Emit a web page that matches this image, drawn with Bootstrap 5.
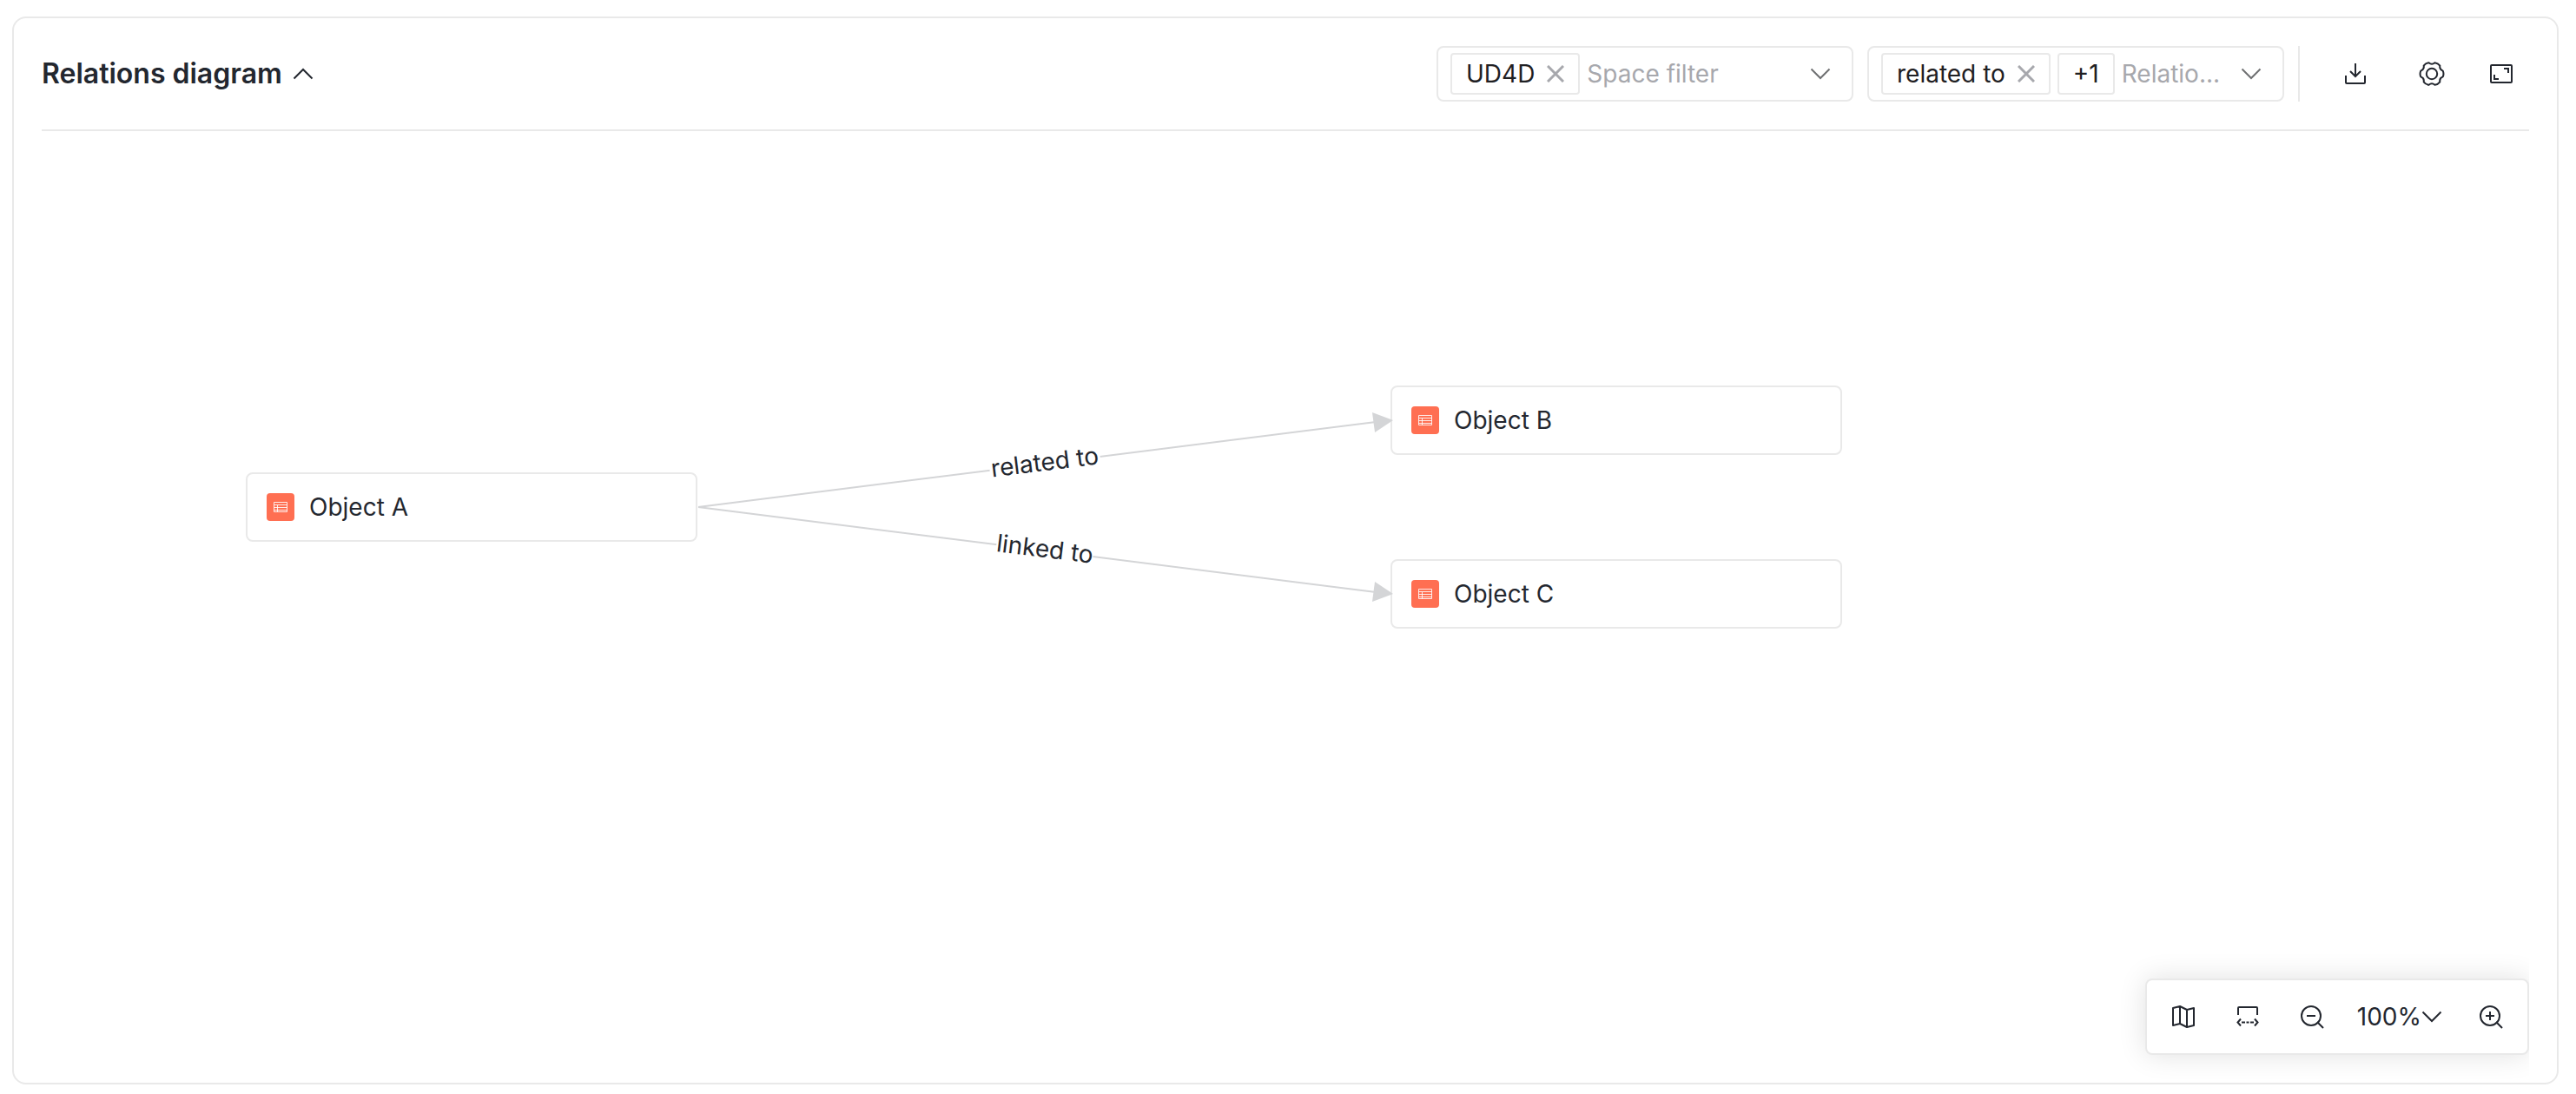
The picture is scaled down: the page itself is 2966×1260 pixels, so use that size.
<!DOCTYPE html>
<html lang="en">
<head>
<meta charset="utf-8">
<meta name="viewport" content="width=device-width, initial-scale=1">
<title>Relations diagram</title>
<link href="https://cdn.jsdelivr.net/npm/bootstrap@5.3.0/dist/css/bootstrap.min.css" rel="stylesheet">
<style>
  :root { --line: #e9e9e9; --ink: #23272f; --muted: #a7a8ad; --edge: #d4d5d7; }
  body { font-family: Inter, "Liberation Sans", sans-serif; font-size: 28px; line-height: 40px; color: var(--ink); background: #fff; }
  svg { display: block; flex: none; }
  .ico { fill: none; stroke: currentColor; stroke-width: 2; }
  .page { padding: 19px 20px 11px 14px; }
  .panel { border: 2px solid var(--line); border-radius: 16px; padding: 32px; }
  .panel-head { border-bottom: 2px solid var(--line); padding-bottom: 32px; }
  .panel-title { font-size: 32px; line-height: 40px; font-weight: 600; }
  .plain { border: 0; background: none; padding: 0; color: inherit; line-height: inherit; }
  .filter { width: 480px; height: 64px; border: 2px solid var(--line); border-radius: 8px; padding: 0 24px 0 14px; }
  .chip { height: 48px; border: 2px solid var(--line); border-radius: 4px; padding: 0 16px; color: #1f2023; white-space: nowrap; gap: 14px; }
  .chip .plain { color: var(--muted); }
  .filter input { flex: 1 1 0; min-width: 0; border: 0; outline: 0; padding: 0; background: none; color: var(--ink); text-overflow: ellipsis; }
  .filter input::placeholder { color: var(--muted); opacity: 1; }
  .caret { color: #6f7072; }
  .rule { width: 2px; height: 64px; background: var(--line); }
  .tool { width: 32px; height: 32px; display: flex; align-items: center; justify-content: center; }
  .stage { overflow-x: clip; }
  .edges { position: absolute; left: 0; top: 0; z-index: 1; overflow: visible; pointer-events: none; }
  .edges text { font-size: 28px; fill: var(--ink); text-anchor: middle; }
  .edges line { stroke: var(--edge); stroke-width: 2; }
  .edges polygon { fill: var(--edge); }
  .edges rect { fill: #fff; }
  .node { position: absolute; width: 520px; height: 80px; border: 2px solid var(--line); border-radius: 8px; padding: 0 22px; gap: 17px; background: #fff; }
  .node-a { left: 235px; top: 393px; }
  .node-b { left: 1553px; top: 293px; }
  .node-c { left: 1553px; top: 493px; }
  .zoombar { position: absolute; right: 0; bottom: 0; height: 88px; border: 2px solid var(--line); border-radius: 8px; background: #fff; padding: 0 26px; gap: 36px; box-shadow: 0 0 32px rgba(0,0,0,.12); }
  .zoombar-tools { gap: 42px; }
</style>
<script src="https://cdn.jsdelivr.net/npm/bootstrap@5.3.0/dist/js/bootstrap.bundle.min.js" defer></script>
</head>
<body>
<svg width="0" height="0" class="position-absolute" aria-hidden="true">
  <symbol id="i-table" viewBox="0 0 32 32">
    <rect width="32" height="32" rx="4" fill="#ff6f52"/>
    <path d="M8.500 10.500h15v11h-15zM8.500 13.500h15M8.500 16.500h15M8.500 19.500h15M12.500 14v7.500" fill="none" stroke="#fff" stroke-opacity=".85" stroke-width="1"/>
  </symbol>
  <symbol id="i-down" viewBox="0 0 24 24"><path d="M1.500 6.500L12 17L22.500 6.500"/></symbol>
  <symbol id="i-x" viewBox="0 0 20 20"><path d="M1 1L19 19M19 1L1 19" stroke-width="3"/></symbol>
</svg>
<div class="page d-flex min-vh-100">
  <main class="panel d-flex flex-column flex-grow-1">
    <header class="panel-head d-flex align-items-center justify-content-between">
      <div class="d-flex align-items-center gap-2">
        <h2 class="panel-title m-0">Relations diagram</h2>
        <button class="plain tool" type="button" aria-label="Collapse"><svg class="ico" width="24" height="24" viewBox="0 0 24 24"><path d="M1.500 17.500L12 7L22.500 17.500"/></svg></button>
      </div>
      <div class="d-flex align-items-center gap-3">
        <div class="filter d-flex align-items-center gap-2">
          <span class="chip d-flex align-items-center">UD4D
            <button class="plain" type="button" aria-label="Remove UD4D"><svg class="ico" width="20" height="20"><use href="#i-x"/></svg></button></span>
          <input type="text" placeholder="Space filter" aria-label="Space filter">
          <button class="plain caret" type="button" aria-label="Open space filter"><svg class="ico" width="24" height="24"><use href="#i-down"/></svg></button>
        </div>
        <div class="filter d-flex align-items-center gap-2">
          <span class="chip d-flex align-items-center">related to
            <button class="plain" type="button" aria-label="Remove related to"><svg class="ico" width="20" height="20"><use href="#i-x"/></svg></button></span>
          <span class="chip d-flex align-items-center">+1</span>
          <input type="text" placeholder="Relatio..." aria-label="Relation filter">
          <button class="plain caret" type="button" aria-label="Open relation filter"><svg class="ico" width="24" height="24"><use href="#i-down"/></svg></button>
        </div>
        <div class="rule"></div>
        <div class="d-flex align-items-center ps-4 pe-3">
          <button class="plain tool ms-2 me-5" type="button" aria-label="Download"><svg class="ico" width="28" height="28" viewBox="0 0 28 28"><path d="M14 2v15M8 11l6 6 6-6M3 16v8q0 1 1 1h20q1 0 1-1v-8"/></svg></button>
          <button class="plain tool ms-2 me-4" type="button" aria-label="Settings"><svg class="ico" width="30" height="30" viewBox="-15 -15 30 30"><path stroke-linejoin="round" d="M12.750 -3.420Q14.200 0 12.750 3.420Q8.500 4.900 9.330 9.330Q7.100 12.300 3.420 12.750Q0 9.800 -3.420 12.750Q-7.100 12.300 -9.330 9.330Q-8.500 4.900 -12.750 3.420Q-14.200 0 -12.750 -3.420Q-8.500 -4.900 -9.330 -9.330Q-7.100 -12.300 -3.420 -12.750Q0 -9.800 3.420 -12.750Q7.100 -12.300 9.330 -9.330Q8.500 -4.900 12.750 -3.420Z"/><circle r="6.200"/></svg></button>
          <button class="plain tool ms-4" type="button" aria-label="Full screen"><svg class="ico" width="28" height="28" viewBox="0 0 28 28"><rect x="2" y="4" width="24" height="20" rx="1"/><path d="M17 8h5v5M6 15v5h5"/></svg></button>
        </div>
      </div>
    </header>
    <section class="stage position-relative flex-grow-1" aria-label="Diagram">
      <div class="node node-a d-flex align-items-center"><svg width="32" height="32"><use href="#i-table"/></svg>Object A</div>
      <div class="node node-b d-flex align-items-center"><svg width="32" height="32"><use href="#i-table"/></svg>Object B</div>
      <div class="node node-c d-flex align-items-center"><svg width="32" height="32"><use href="#i-table"/></svg>Object C</div>
      <svg class="edges" width="1600" height="600">
        <line x1="756" y1="433" x2="1536" y2="335"/>
        <line x1="756" y1="433" x2="1536" y2="531"/>
        <polygon points="1532,324 1535,347 1556,333"/>
        <polygon points="1532,542 1535,519 1556,533"/>
        <g transform="translate(1155 382) rotate(-7)"><rect x="-64" y="-16" width="128" height="32"/><text y="9">related to</text></g>
        <g transform="translate(1155 482) rotate(7)"><rect x="-56" y="-16" width="112" height="32"/><text y="9">linked to</text></g>
      </svg>
      <div class="zoombar d-flex align-items-center">
        <div class="zoombar-tools d-flex align-items-center">
          <button class="plain tool" type="button" aria-label="Map"><svg class="ico" width="28" height="28" viewBox="0 0 28 28"><path stroke-linejoin="round" d="M2 4l8-2 8 4 8-2v20l-8 2-8-4-8 2zM10 2v20M18 6v20"/></svg></button>
          <button class="plain tool" type="button" aria-label="Fit to width"><svg class="ico" width="28" height="28" viewBox="0 0 28 28"><path d="M3 12V4q0-1 1-1h20q1 0 1 1v8M6 16.500L2.500 20.500L6 24.500M22 16.500L25.500 20.500L22 24.500M7 20.500h4M12.500 20.500h3M17 20.500h4"/></svg></button>
          <button class="plain tool" type="button" aria-label="Zoom out"><svg class="ico" width="28" height="28" viewBox="0 0 28 28"><circle cx="13" cy="13" r="11"/><path d="M8 13h10M20 20l7 7"/></svg></button>
        </div>
        <button class="plain d-flex align-items-center" type="button">100%<svg class="ico me-1" width="24" height="24"><use href="#i-down"/></svg></button>
        <button class="plain tool" type="button" aria-label="Zoom in"><svg class="ico" width="28" height="28" viewBox="0 0 28 28"><circle cx="13" cy="13" r="11"/><path d="M8 13h10M13 8v10M20 20l7 7"/></svg></button>
      </div>
    </section>
  </main>
</div>
</body>
</html>
